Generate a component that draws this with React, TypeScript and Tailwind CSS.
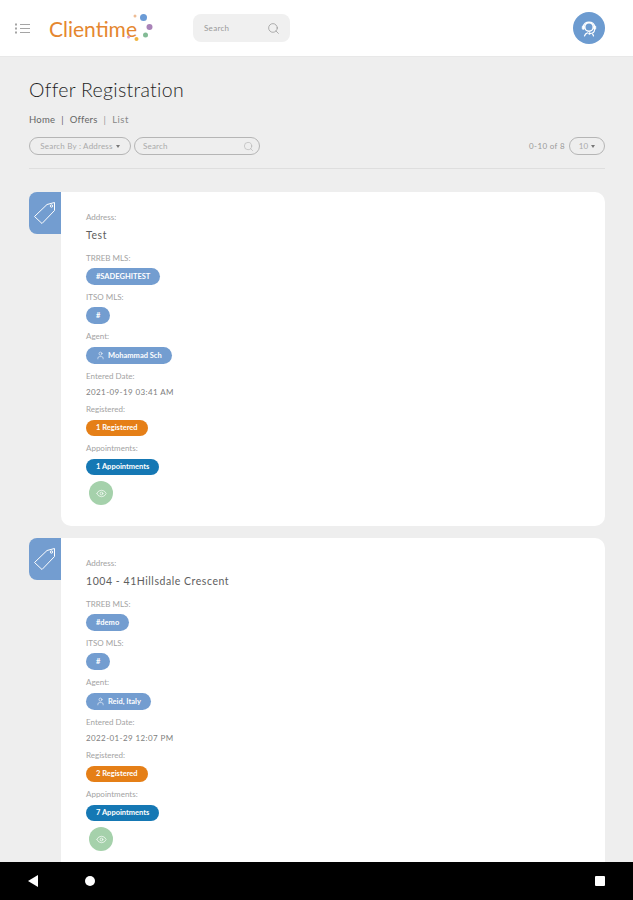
import { Eye, Search, User } from 'lucide-react'
import type { ReactNode } from 'react'

function Label({ children, className }: { children: ReactNode; className: string }) {
    return <div className={`h-[10px] text-[8px] leading-[10px] text-[#a3a3a3] ${className}`}>{children}</div>
}

function Pill({ children, color, className }: { children: ReactNode; color: string; className: string }) {
    return (
        <div className={`flex w-fit items-center rounded-full px-[10px] text-[7.5px] font-bold text-white ${color} ${className}`}>
            {children}
        </div>
    )
}

function TagIcon() {
    return (
        <svg width="24" height="24" viewBox="0 0 24 24" fill="none" stroke="white" strokeWidth="1" strokeLinejoin="round">
            <path d="M1.5 15.5 14 3.5 21.5 1.5 21.5 9.5 9 22.5Z" />
            <circle cx="18.5" cy="5" r="1.2" />
        </svg>
    )
}

function SupportIcon() {
    return (
        <svg width="20" height="20" viewBox="0 0 20 20" fill="none" stroke="white" strokeLinecap="round">
            <circle cx="10" cy="9" r="4.2" strokeWidth="1.4" />
            <path d="M4.5 9C4.5 2.5 15.5 2.5 15.5 9" strokeWidth="1.4" />
            <rect x="3.2" y="7.8" width="2.2" height="3.6" rx="1" fill="white" strokeWidth="0.6" />
            <rect x="14.6" y="7.8" width="2.2" height="3.6" rx="1" fill="white" strokeWidth="0.6" />
            <path d="M15.6 11.5C15.5 14.5 13.5 15.5 11 15.5" strokeWidth="1.1" />
            <circle cx="10.5" cy="15.5" r="1" fill="white" strokeWidth="0.5" />
            <path d="M5.5 18C6 16 7 15.2 8.5 14.8M14.5 18C14.3 17.2 14 16.7 13.6 16.2" strokeWidth="1.2" />
        </svg>
    )
}

type Offer = {
    address: string
    trreb: string
    agent: string
    date: string
    registered: string
    appointments: string
}

function OfferCard({ offer }: { offer: Offer }) {
    return (
        <div className="flex">
            <div className="flex h-[42px] w-[32px] shrink-0 items-center justify-center rounded-l-[8px] bg-[#739dd0]">
                <TagIcon />
            </div>
            <div className="h-[334px] flex-1 rounded-r-[10px] rounded-bl-[10px] bg-white pl-[25px] pt-[20px]">
                <Label className="">Address:</Label>
                <div className="mt-[6px] h-[14px] text-[10.5px] leading-[14px] tracking-[0.55px] text-[#5e5e5e]">{offer.address}</div>
                <Label className="mt-[11px]">TRREB MLS:</Label>
                <Pill color="bg-[#739dd0]" className="mt-[5px] h-[17px]">{offer.trreb}</Pill>
                <Label className="mt-[7px]">ITSO MLS:</Label>
                <Pill color="bg-[#739dd0]" className="mt-[5px] h-[17px]">#</Pill>
                <Label className="mt-[7px]">Agent:</Label>
                <Pill color="bg-[#739dd0]" className="mt-[6px] h-[17px] gap-[3px]">
                    <User size={9} strokeWidth={1.5} />
                    {offer.agent}
                </Pill>
                <Label className="mt-[7px]">Entered Date:</Label>
                <div className="mt-[5px] h-[12px] text-[8px] leading-[12px] tracking-[0.4px] text-[#808080]">{offer.date}</div>
                <Label className="mt-[6px]">Registered:</Label>
                <Pill color="bg-[#e57f17]" className="mt-[6px] h-[16px]">{offer.registered}</Pill>
                <Label className="mt-[7px]">Appointments:</Label>
                <Pill color="bg-[#1578b4]" className="mt-[6px] h-[16px]">{offer.appointments}</Pill>
                <div className="ml-[3px] mt-[6px] flex h-[24px] w-[24px] items-center justify-center rounded-full bg-[#a5d1ab]">
                    <Eye size={11} color="white" strokeWidth={1.5} />
                </div>
            </div>
        </div>
    )
}

const offers: Offer[] = [
    {
        address: 'Test',
        trreb: '#SADEGHITEST',
        agent: 'Mohammad Sch',
        date: '2021-09-19 03:41 AM',
        registered: '1 Registered',
        appointments: '1 Appointments',
    },
    {
        address: '1004 - 41Hillsdale Crescent',
        trreb: '#demo',
        agent: 'Reid, Italy',
        date: '2022-01-29 12:07 PM',
        registered: '2 Registered',
        appointments: '7 Appointments',
    },
]

export default function App() {
    return (
        <div className="flex h-[900px] w-[633px] flex-col overflow-hidden bg-[#eeeeee] font-['Lato','Noto_Sans',sans-serif]">
            <header className="flex h-[57px] shrink-0 items-center border-b border-[#e8e8e8] bg-white">
                <svg className="ml-[15px]" width="15" height="11" viewBox="0 0 15 11" fill="#a5a5a5">
                    <rect x="0" y="0.5" width="2" height="2" />
                    <rect x="0" y="4.5" width="2" height="2" />
                    <rect x="0" y="8.5" width="2" height="2" />
                    <rect x="5" y="1" width="10" height="1" />
                    <rect x="5" y="5" width="10" height="1" />
                    <rect x="5" y="9" width="10" height="1" />
                </svg>
                <div className="ml-[19px] w-[86px] text-[21px] leading-none text-[#e5872f]">Clientime</div>
                <svg className="-ml-[8px]" width="27" height="30" viewBox="0 0 27 30">
                    <circle cx="8" cy="3" r="1.5" fill="#eebc94" />
                    <circle cx="16.5" cy="4.5" r="3.5" fill="#6b9bd6" />
                    <circle cx="22.5" cy="14" r="3" fill="#a983b8" />
                    <circle cx="18.5" cy="22" r="2.5" fill="#83bb95" />
                    <circle cx="9.5" cy="26" r="2" fill="#efb43f" />
                    <circle cx="1.5" cy="24" r="1.5" fill="#dca0c8" />
                </svg>
                <div className="ml-[39px] flex h-[28px] w-[97px] items-center justify-between rounded-[8px] bg-[#f0f0f0] pl-[11px] pr-[10px]">
                    <span className="text-[8px] tracking-[0.3px] text-[#999]">Search</span>
                    <Search size={13} color="#8a8a8a" strokeWidth={1.2} />
                </div>
                <div className="ml-auto mr-[28px] flex h-[32px] w-[32px] items-center justify-center rounded-full bg-[#6c9bd0]">
                    <SupportIcon />
                </div>
            </header>

            <main className="min-h-0 flex-1 overflow-hidden pl-[29px] pr-[28px] pt-[19px]">
                <h1 className="h-[28px] text-[19.5px] font-light leading-[28px] tracking-[0.3px] text-[#1f1f1f]">Offer Registration</h1>
                <div className="mt-[10px] flex h-[12px] items-center gap-[5px] text-[9.5px] leading-[12px] tracking-[0.2px] text-[#666]">
                    <span>Home</span>
                    <span className="ml-[1px]">|</span>
                    <span className="ml-[1px]">Offers</span>
                    <span className="ml-[1px] text-[#999]">|</span>
                    <span className="ml-[1px] tracking-[0.5px] text-[#888]">List</span>
                </div>
                <div className="mt-[11px] flex h-[18px] items-center">
                    <div className="flex h-[18px] w-[102px] items-center justify-center gap-[3px] rounded-full border border-[#b5b5b5] text-[8px] tracking-[0.2px] text-[#aaa]">
                        Search By : Address
                        <span className="h-0 w-0 border-x-[2.5px] border-t-[3px] border-x-transparent border-t-[#777]" />
                    </div>
                    <div className="ml-[3px] flex h-[18px] w-[126px] items-center justify-between rounded-full border border-[#b5b5b5] pl-[8px] pr-[5px] text-[8px] tracking-[0.2px] text-[#aaa]">
                        Search
                        <Search size={11} color="#aaa" strokeWidth={1.2} />
                    </div>
                    <span className="ml-auto text-[8px] tracking-[0.35px] text-[#999]">0-10 of 8</span>
                    <div className="ml-[4px] flex h-[18px] w-[36px] items-center justify-center gap-[3px] rounded-full border border-[#b5b5b5] text-[8px] text-[#aaa]">
                        10
                        <span className="h-0 w-0 border-x-[2.5px] border-t-[3px] border-x-transparent border-t-[#777]" />
                    </div>
                </div>
                <div className="mt-[13px] border-t border-[#dedede]" />
                <div className="mt-[23px] flex flex-col gap-[12px]">
                    {offers.map((offer) => (
                        <OfferCard key={offer.address} offer={offer} />
                    ))}
                </div>
            </main>

            <nav className="flex h-[38px] shrink-0 items-center bg-black">
                <span className="ml-[28px] h-0 w-0 border-y-[6px] border-r-[10px] border-y-transparent border-r-white" />
                <span className="ml-[47px] h-[10px] w-[10px] rounded-full bg-white" />
                <span className="ml-auto mr-[28px] h-[10px] w-[10px] rounded-[1px] bg-white" />
            </nav>
        </div>
    )
}
